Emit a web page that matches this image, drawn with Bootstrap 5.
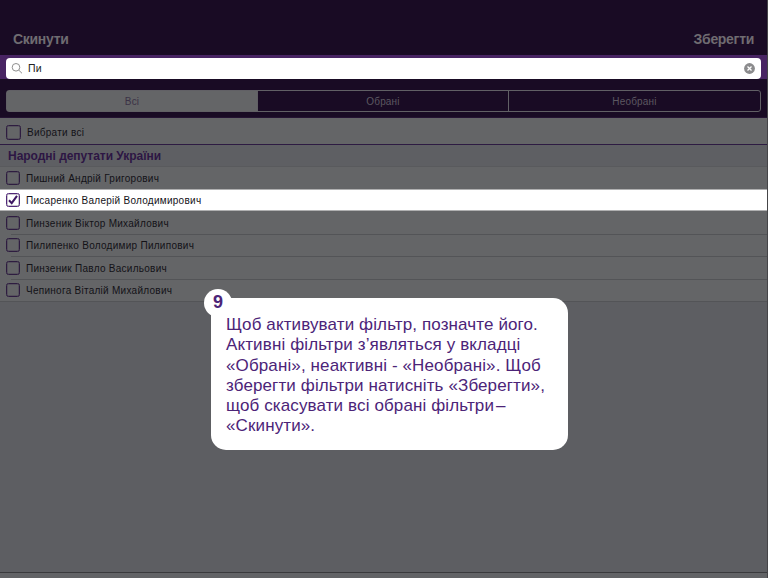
<!DOCTYPE html>
<html lang="uk">
<head>
<meta charset="utf-8">
<title>Фільтри</title>
<link rel="stylesheet" href="https://cdn.jsdelivr.net/npm/bootstrap@5.3.0/dist/css/bootstrap.min.css">
<style>
body{width:768px;height:578px;overflow:hidden;background:#5d5e62;font-family:"Liberation Sans",Arial,sans-serif;color:#131217}
.screen{height:578px;border-right:1px solid #454548}
.topbar{height:55px;background:#190b24;padding:23px 13px 0;color:#6f6c71;font-size:14px;line-height:32px;font-weight:700}
.topbar span{letter-spacing:-.3px}
.searchbar{height:24px;background:#482463;padding:3px 6px 0}
.field{height:21px;background:#fff;border-radius:4px;padding:0 6px 0 5px;color:#222;font-size:10.5px}
.field .query{margin-left:5px;letter-spacing:.2px}
.tabs{height:39px;background:#190b24;padding:11px 6px 6px;border-bottom:1px solid #241332}
.segments{height:22px;border:1px solid #616065;border-radius:3px;font-size:10px;color:#5c5861;letter-spacing:.18px}
.segments>div+div{border-left:1px solid #616065}
.segments .current{background:#646567;color:#3b3246}
.line-item{height:22px;background:#646567;padding-left:6px;font-size:10px;color:#131217;position:relative}
.line-item.taller{height:23px}
.line-item.ruled::before{content:"";position:absolute;left:11px;right:0;top:0;height:1px;background:#535457}
.line-item span,.box-label{margin-left:6px;letter-spacing:.27px;white-space:nowrap}
.line-item span{padding-top:1px}
.all-item{height:27px;background:#646567;border-bottom:1px solid #2d1b42;padding:3px 0 0 6px;font-size:10px}
.heading-row{height:22px;background:#5e5f63;padding-left:8px;font-size:12px;font-weight:700;color:#2d1644;letter-spacing:-.03px;border-bottom:1px solid #595a5d}
.tick{position:relative;width:14px;height:14px;border:1.5px solid #2e1c40;border-radius:2.5px;flex:none;box-shadow:inset 0 0 0 .5px #2e1c4080}
.all-item .tick{width:15px;height:15px}
.line-item.picked{background:#fff;border-top:1px solid #b0b0b1;border-bottom:1px solid #b0b0b1}
.picked .tick{border-color:#512878}
.list-end{height:1px;background:#535457}
.bottom-edge{height:6px;background:#626366;border-top:1px solid #3a3a3d}
.tip{position:absolute;left:211px;top:298px;width:357px;height:152px;background:#fff;border-radius:15px;padding:17px 0 0 15px;color:#4c2478;font-size:17px;line-height:20.3px;white-space:nowrap;letter-spacing:.12px}
.tip .dash{margin-left:2px}
.tip-number{position:absolute;left:-7px;top:-9.5px;width:28px;height:28px;border-radius:50%;background:#fff;font-size:18px;font-weight:700}
</style>
<script src="https://cdn.jsdelivr.net/npm/bootstrap@5.3.0/dist/js/bootstrap.bundle.min.js"></script>
</head>
<body class="m-0 position-relative">
<div class="screen d-flex flex-column">
  <header class="topbar d-flex justify-content-between flex-shrink-0"><span>Скинути</span><span>Зберегти</span></header>
  <div class="searchbar flex-shrink-0">
    <div class="field d-flex align-items-center">
      <svg width="12" height="12" viewBox="0 0 12 12" fill="none" stroke="#8f8f8f" stroke-width="1"><circle cx="5" cy="4.3" r="3.8"/><path d="M7.8 7.2 11 10.3"/></svg>
      <span class="query flex-grow-1">Пи</span>
      <svg width="11" height="11" viewBox="0 0 11 11"><circle cx="5.5" cy="5.5" r="5.4" fill="#8b8b8d"/><path d="M3.5 3.5 7.5 7.5M7.5 3.5 3.5 7.5" stroke="#fff" stroke-width="1.3"/></svg>
    </div>
  </div>
  <div class="tabs flex-shrink-0">
    <div class="segments d-flex text-center">
      <div class="current d-flex align-items-center justify-content-center" style="width:250px">Всі</div>
      <div class="d-flex align-items-center justify-content-center" style="width:251px">Обрані</div>
      <div class="flex-grow-1 d-flex align-items-center justify-content-center">Необрані</div>
    </div>
  </div>
  <div class="all-item d-flex align-items-center flex-shrink-0"><i class="tick"></i><span class="box-label">Вибрати всі</span></div>
  <div class="heading-row d-flex align-items-center flex-shrink-0"><span>Народні депутати України</span></div>
  <div>
    <div class="line-item d-flex align-items-center"><i class="tick"></i><span>Пишний Андрій Григорович</span></div>
    <div class="line-item picked d-flex align-items-center"><i class="tick d-flex"><svg width="12" height="12" viewBox="0 0 12 12" fill="none" stroke="#3d1762" stroke-width="2"><path d="M2 6.3 4.7 9.2 10 1.8"/></svg></i><span>Писаренко Валерій Володимирович</span></div>
    <div class="line-item taller d-flex align-items-center"><i class="tick"></i><span>Пинзеник Віктор Михайлович</span></div>
    <div class="line-item ruled d-flex align-items-center"><i class="tick"></i><span>Пилипенко Володимир Пилипович</span></div>
    <div class="line-item taller ruled d-flex align-items-center"><i class="tick"></i><span>Пинзеник Павло Васильович</span></div>
    <div class="line-item ruled d-flex align-items-center"><i class="tick"></i><span>Чепинога Віталій Михайлович</span></div>
    <div class="list-end"></div>
  </div>
  <div class="bottom-edge mt-auto"></div>
</div>
<aside class="tip">
  <div class="tip-number d-flex align-items-center justify-content-center">9</div>
  <div>Щоб активувати фільтр, позначте його.</div>
  <div>Активні фільтри з’являться у вкладці</div>
  <div>«Обрані», неактивні - «Необрані». Щоб</div>
  <div>зберегти фільтри натисніть «Зберегти»,</div>
  <div>щоб скасувати всі обрані фільтри<span class="dash">–</span></div>
  <div>«Скинути».</div>
</aside>
</body>
</html>
